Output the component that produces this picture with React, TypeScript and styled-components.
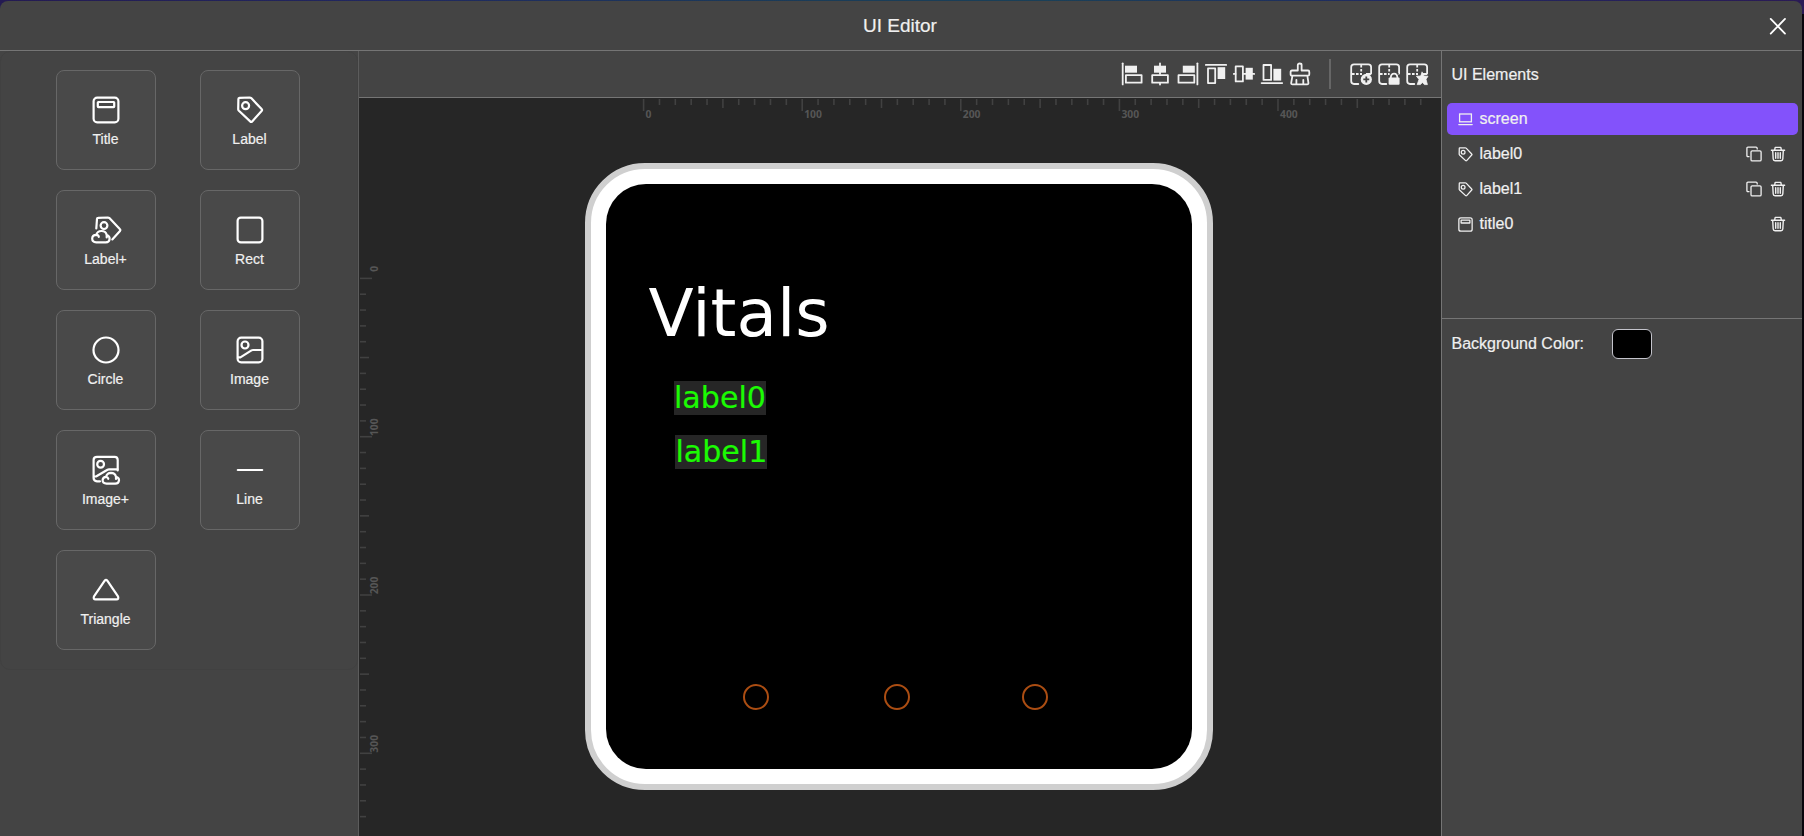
import React from "react";
import styled, { createGlobalStyle } from "styled-components";

const line = "#757575";
const panel = "#444444";

const GlobalStyle = createGlobalStyle`
  *, *::before, *::after { box-sizing: border-box; }
  html, body, #root { height: 100%; margin: 0; }
  body {
    overflow: hidden;
    background: #08060c;
    color: #f0f0f0;
    font-family: "Liberation Sans", Arial, sans-serif;
    -webkit-text-stroke: 0.2px currentColor;
  }
  svg { display: block; flex: none; }
`;

const Page = styled.div`
  height: 836px;
  padding: 1px 2px 0 0;
  background: linear-gradient(90deg, #241a52, #202860 22%, #1a3c58 45%, #1a4058 58%, #202860 78%, #2a1a55) top / 100% 14px no-repeat;
`;

const Modal = styled.div`
  display: flex;
  flex-direction: column;
  height: 835px;
  background: ${panel};
  border-radius: 8px 8px 0 0;
  overflow: hidden;
`;

const Header = styled.header`
  display: grid;
  grid-template-columns: 1fr auto 1fr;
  align-items: center;
  flex: none;
  height: 50px;
  padding-right: 2px;
  border-bottom: 1px solid ${line};
`;

const Heading = styled.h1`
  grid-column: 2;
  margin: 0;
  font-size: 19px;
  font-weight: 400;
  line-height: 24px;
`;

const CloseButton = styled.button`
  justify-self: end;
  margin-right: 11.5px;
  padding: 0;
  border: 0;
  background: none;
  color: #fff;
`;

const Body = styled.div`
  display: flex;
  flex: 1;
  min-height: 0;
`;

const Palette = styled.aside`
  flex: none;
  width: 359px;
  border-right: 1px solid #5c5c5c;
`;

const PaletteCard = styled.div`
  height: 619px;
  padding: 18px 0 0 54.5px;
  border: 1px solid #414141;
  border-radius: 10px;
`;

const PaletteGrid = styled.div`
  display: grid;
  grid-template-columns: 100px 100px;
  column-gap: 44px;
  row-gap: 20px;
`;

const Tile = styled.button`
  display: flex;
  flex-direction: column;
  align-items: center;
  height: 100px;
  padding: 25px 0 0;
  border: 1px solid #676767;
  border-radius: 8px;
  background: #494949;
  color: #fff;
  font: 14px/20px "Liberation Sans", Arial, sans-serif;
  -webkit-text-stroke: 0.2px currentColor;
`;

const TileName = styled.span`
  margin-top: 5px;
  color: #f0f0f0;
`;

const Workspace = styled.main`
  display: flex;
  flex-direction: column;
  flex: none;
  width: 1082px;
`;

const Toolbar = styled.div`
  display: flex;
  align-items: center;
  justify-content: flex-end;
  gap: 4px;
  flex: none;
  height: 47px;
  padding-right: 12.4px;
  border-bottom: 1px solid ${line};
  color: #f0f0f0;
`;

const ToolDivider = styled.span`
  width: 2px;
  height: 30px;
  margin: 0 13.4px;
  background: #666;
`;

const Stage = styled.div`
  position: relative;
  flex: 1;
  background: #262626;
  -webkit-text-stroke: 0;
`;

const Rulers = styled.svg`
  position: absolute;
  inset: 0;
`;

const Device = styled.div`
  position: absolute;
  left: 226.4px;
  top: 64.9px;
  width: 627.6px;
  height: 627.2px;
  padding: 15px;
  border: 6px solid #cfcfcf;
  border-radius: 60px;
  background: #fff;
`;

const Screen = styled.div`
  position: relative;
  height: 100%;
  border-radius: 40px;
  background: #000;
`;

const Placed = styled.span<{ $x: number; $y: number }>`
  position: absolute;
  left: ${(p) => p.$x}px;
  top: ${(p) => p.$y}px;
  font-family: "DejaVu Sans", sans-serif;
  white-space: nowrap;
`;

const TitleText = styled(Placed)`
  font-size: 66px;
  line-height: 76px;
  color: #fff;
`;

const LabelText = styled(Placed)`
  width: 92px;
  height: 34px;
  background: #262626;
  color: #1bfb02;
  font-size: 30.1px;
  line-height: 34px;
  -webkit-text-stroke: 0.2px currentColor;
`;

const Ring = styled.span<{ $x: number }>`
  position: absolute;
  left: ${(p) => p.$x}px;
  top: 500px;
  width: 26px;
  height: 26px;
  border: 2px solid #ab4d12;
  border-radius: 50%;
`;

const Inspector = styled.aside`
  flex: 1;
  min-width: 0;
  border-left: 1px solid ${line};
`;

const ElementList = styled.section`
  height: 268px;
  padding: 0 4px 0 5px;
  border-bottom: 1px solid ${line};
`;

const ListTitle = styled.h2`
  margin: 0;
  padding: 14px 6px 0 4.5px;
  height: 52px;
  font-size: 16px;
  font-weight: 400;
  line-height: 20px;
`;

const Row = styled.div<{ $active?: boolean }>`
  display: flex;
  align-items: center;
  height: 32px;
  margin-bottom: 3px;
  padding: 0 12px 0 11px;
  border-radius: 5px;
  background: ${(p) => (p.$active ? "#8352fb" : "transparent")};
  font-size: 16px;
`;

const RowName = styled.span`
  flex: 1;
  margin-left: 6.5px;
  line-height: 20px;
  padding-bottom: 1px;
`;

const RowActions = styled.span`
  display: flex;
  gap: 8.5px;
`;

const Property = styled.div`
  display: flex;
  align-items: center;
  height: 50px;
  padding-left: 9.5px;
  font-size: 16px;
`;

const PropertyName = styled.span`
  width: 160.5px;
`;

const Swatch = styled.span`
  width: 40px;
  height: 30px;
  border: 1px solid #c4c4cc;
  border-radius: 6px;
  background: #000;
`;

type IconProps = { size?: number; children: React.ReactNode; width?: number; box?: string };

const Icon = ({ size = 28, children, width = 2.2, box }: IconProps) => (
  <svg
    width={size}
    height={size}
    viewBox={box ?? `0 0 ${size} ${size}`}
    fill="none"
    stroke="currentColor"
    strokeWidth={width}
    strokeLinecap="round"
    strokeLinejoin="round"
  >
    {children}
  </svg>
);

const titleShape = (
  <>
    <rect x="1.6" y="1.6" width="24.8" height="24.8" rx="3.6" />
    <rect x="5.8" y="6" width="16.4" height="5.2" rx="0.6" />
  </>
);
const labelShape = (
  <>
    <path d="M2.4 2.9Q2.4 1.9 3.4 1.8L13.6 1.5Q14.6 1.5 15.2 2.1L25.6 13.1Q26.5 14 25.6 15L16.2 25.4Q15.2 26.4 14.2 25.4L2.9 14.8Q2.2 14.1 2.2 13.2Z" />
    <circle cx="9.6" cy="9.7" r="3.5" />
  </>
);

const paletteItems: { name: string; icon: React.ReactNode }[] = [
  { name: "Title", icon: titleShape },
  { name: "Label", icon: labelShape },
  {
    name: "Label+",
    icon: (
      <>
        <path d="M4.3 12.5L5 2.8Q5.1 1.8 6.1 1.8L15.8 1.5Q16.8 1.5 17.4 2.1L28 13.2Q28.8 14 28 14.9L20.3 23.4" />
        <circle cx="12" cy="9.6" r="3.4" />
        <path d="M4.2 26.4Q.2 26.3 .2 22.6Q.3 19 4.2 18.9Q5.3 15 9.4 15Q14 15 14.7 19Q17.8 20 17.6 23Q17.3 26.4 13.8 26.4ZM4.2 18.9Q6.6 19.1 6.8 20.8M14.7 19V21.5" />
      </>
    ),
  },
  { name: "Rect", icon: <rect x="1.6" y="1.6" width="24.8" height="24.8" rx="3.2" /> },
  { name: "Circle", icon: <circle cx="14" cy="14" r="12.5" /> },
  {
    name: "Image",
    icon: (
      <>
        <rect x="1.6" y="1.6" width="24.8" height="24.8" rx="3.6" />
        <circle cx="9" cy="9" r="3.5" />
        <path d="M2 21.4H4.4L15.5 14.4Q16.2 14 17 14H26" />
      </>
    ),
  },
  {
    name: "Image+",
    icon: (
      <>
        <path d="M8 25.3H5Q1.6 25 1.6 22V4Q1.6.8 5 .8H22.6Q25.7.8 25.7 4V14.5" />
        <circle cx="8.6" cy="8.3" r="3.4" />
        <path d="M2 20.5H4L15.5 13.7Q16.2 13.3 17 13.3H25.5" />
        <path d="M14.6 27.6Q10.5 27.5 10.6 24.1Q10.8 21 14 20.8Q15.1 16.9 18.9 16.9Q23.2 17 24 20.8Q27.2 21.7 27 24.4Q26.7 27.6 23.3 27.6ZM14 20.8Q16 21.1 16.3 22.8M24 20.8V23" />
      </>
    ),
  },
  { name: "Line", icon: <path d="M1.8 14H26.2" /> },
  {
    name: "Triangle",
    icon: <path d="M12.7 4.7Q14 3.1 15.3 4.7L26 20.4Q27 23.4 24.5 23.4H3.6Q1 23.4 2 20.4Z" />,
  },
];

// Overflow stays visible so that rounded caps and cloud outlines are not clipped.
const TileIcon = styled.span`
  svg {
    overflow: visible;
  }
`;

const alignTools: React.ReactNode[] = [
  <>
    <path d="M2.7 1.3V22.4" />
    <rect x="5" y="3.7" width="12" height="7" fill="currentColor" stroke="none" />
    <rect x="5.9" y="13.2" width="15.7" height="7.5" />
  </>,
  <>
    <path d="M12 1.3V12M12 21V22.6" />
    <rect x="6" y="3.7" width="12" height="7" fill="currentColor" stroke="none" />
    <rect x="4.2" y="13.2" width="15.7" height="7.5" />
  </>,
  <>
    <path d="M21.4 1.3V22.4" />
    <rect x="6.8" y="3.7" width="12" height="7" fill="currentColor" stroke="none" />
    <rect x="2.5" y="13.2" width="15.8" height="7.5" />
  </>,
  <>
    <path d="M1.8 2.9H22.2" />
    <rect x="4" y="6.4" width="7.2" height="14.7" />
    <rect x="13.6" y="5.2" width="7.6" height="11.8" fill="currentColor" stroke="none" />
  </>,
  <>
    <path d="M1.8 11.9H3.5M11 11.9H22.2" />
    <rect x="3.7" y="4.4" width="7.2" height="15" />
    <rect x="13.6" y="5.8" width="7.2" height="11.8" fill="currentColor" stroke="none" />
  </>,
  <>
    <path d="M1.6 21.1H22.2" />
    <rect x="3.5" y="3" width="7.6" height="14.9" />
    <rect x="13.4" y="6.8" width="7.8" height="11.8" fill="currentColor" stroke="none" />
  </>,
  <>
    <path d="M9.8 8.5V3Q9.8 1.5 11.7 1.5Q13.6 1.5 13.6 3V8.5H20Q21.3 8.5 21.3 10V12.2Q21.3 13.6 20 13.6H4Q2.6 13.6 2.6 12.2V10Q2.6 8.5 4 8.5ZM4.4 13.8L3.2 20.8Q3 22.4 4.5 22.4H19.1Q20.6 22.4 20.4 20.8L19.4 13.8M8.4 22V17.8M15.3 22V17.8" />
  </>,
];

const gridFrame = (
  <>
    <path d="M9.3 22H5Q2.2 22 2.2 19V5Q2.2 2.3 5 2.3H19.3Q22.1 2.3 22.1 5V11.5" />
    <path d="M12.2 3V11M3 12H13" strokeDasharray="2.6 1.4" strokeLinecap="butt" />
    <path d="M17 12H22" strokeLinecap="butt" />
  </>
);

const gridTools: React.ReactNode[] = [
  <>
    {gridFrame}
    <circle cx="17.3" cy="17.4" r="5.6" fill="currentColor" stroke="none" />
    <path d="M17.3 14.4V20.4M14.3 17.4H20.3" stroke={panel} strokeLinecap="butt" />
  </>,
  <>
    {gridFrame}
    <path d="M12.6 14H21.6" stroke={panel} strokeWidth="6" strokeLinecap="butt" />
    <rect x="11.6" y="15.4" width="11" height="7.4" rx="1" fill="currentColor" stroke="none" />
    <path d="M13.8 15.6Q14 11.6 17.1 11.6Q20.2 11.6 20.4 15.6" />
  </>,
  <>
    {gridFrame}
    <path
      d="M17.2 10.2L18.9 14L23 14.2L21 17.2L22.4 22.6H19.4L17.4 20.4L15.4 22.6H12.2L14 17.4L11.4 14.2L15.5 14Z"
      fill="currentColor"
      strokeWidth="0.8"
    />
  </>,
];

const Glyph = ({ kind }: { kind: string }) => {
  if (kind === "screen")
    return (
      <Icon size={15} width={1.3}>
        <rect x="1.6" y="2" width="11.8" height="7.8" strokeLinejoin="miter" />
        <path d="M.8 12.6H14.2" />
      </Icon>
    );
  return (
    <Icon size={15} width={2.4} box="0 0 28 28">
      {kind === "title" ? titleShape : labelShape}
    </Icon>
  );
};

const CopyIcon = () => (
  <Icon size={16} width={1.3}>
    <rect x="5" y="4.9" width="10.1" height="10" rx="1.2" />
    <path d="M3 10.7H2Q.9 10.7.9 9.6V2.4Q.9 1.2 2 1.2H10Q11.2 1.2 11.2 2.4V3" />
  </Icon>
);

const TrashIcon = () => (
  <Icon size={16} width={1.4}>
    <path d="M1.4 4.3H14.6M4.6 4.1L5.2 1.4H10.8L11.4 4.1M2.7 4.6L3.2 13Q3.3 14.8 5 14.8H11Q12.7 14.8 12.8 13L13.3 4.6M5.7 6.8V12.2M8 6.8V12.2M10.3 6.8V12.2" />
  </Icon>
);

const elements = [
  { name: "screen", kind: "screen", active: true },
  { name: "label0", kind: "label", copy: true, remove: true },
  { name: "label1", kind: "label", copy: true, remove: true },
  { name: "title0", kind: "title", remove: true },
];

const tickLength = (value: number) => (value % 100 === 0 ? 12 : value % 50 === 0 ? 9 : 6);
const range = (last: number) => Array.from({ length: last / 10 + 1 }, (_, i) => i * 10);

const RulerMarks = () => (
  <Rulers width="1082" height="738" fill="#565656" fontFamily='"Noto Sans", sans-serif' fontSize="10.3" fontWeight="700">
    {range(490).map((v) => {
      const x = 284.6 + v * 1.586;
      return (
        <g key={`x${v}`}>
          <path d={`M${x} 1v${tickLength(v)}`} stroke="#414141" strokeWidth="1.6" />
          {v % 100 === 0 && (
            <text x={x + 2} y="19.8">
              {v}
            </text>
          )}
        </g>
      );
    })}
    {range(340).map((v) => {
      const y = 180.4 + v * 1.583;
      return (
        <g key={`y${v}`}>
          <path d={`M1 ${y}h${tickLength(v)}`} stroke="#414141" strokeWidth="1.6" />
          {v % 100 === 0 && (
            <text transform={`translate(18.8 ${y - 9.5}) rotate(-90)`} textAnchor="middle">
              {v}
            </text>
          )}
        </g>
      );
    })}
  </Rulers>
);

export default function App() {
  return (
    <Page>
      <GlobalStyle />
      <Modal>
        <Header>
          <Heading>UI Editor</Heading>
          <CloseButton aria-label="Close">
            <Icon size={22} width={1.8}>
              <path d="M3.7 3.9L18 18.6M18 3.9L3.7 18.6" />
            </Icon>
          </CloseButton>
        </Header>
        <Body>
          <Palette>
            <PaletteCard>
              <PaletteGrid>
                {paletteItems.map((item) => (
                  <Tile key={item.name}>
                    <TileIcon>
                      <Icon>{item.icon}</Icon>
                    </TileIcon>
                    <TileName>{item.name}</TileName>
                  </Tile>
                ))}
              </PaletteGrid>
            </PaletteCard>
          </Palette>
          <Workspace>
            <Toolbar>
              {alignTools.map((shape, i) => (
                <Icon key={i} size={24} width={1.8}>
                  {shape}
                </Icon>
              ))}
              <ToolDivider />
              {gridTools.map((shape, i) => (
                <Icon key={i} size={24} width={1.8}>
                  {shape}
                </Icon>
              ))}
            </Toolbar>
            <Stage>
              <RulerMarks />
              <Device>
                <Screen>
                  <TitleText $x={42.2} $y={92.6}>
                    Vitals
                  </TitleText>
                  <LabelText $x={67.6} $y={197.6}>
                    label0
                  </LabelText>
                  <LabelText $x={69} $y={251.6}>
                    label1
                  </LabelText>
                  <Ring $x={136.4} />
                  <Ring $x={277.4} />
                  <Ring $x={415.4} />
                </Screen>
              </Device>
            </Stage>
          </Workspace>
          <Inspector>
            <ElementList>
              <ListTitle>UI Elements</ListTitle>
              {elements.map((el) => (
                <Row key={el.name} $active={el.active}>
                  <Glyph kind={el.kind} />
                  <RowName>{el.name}</RowName>
                  <RowActions>
                    {el.copy && <CopyIcon />}
                    {el.remove && <TrashIcon />}
                  </RowActions>
                </Row>
              ))}
            </ElementList>
            <Property>
              <PropertyName>Background Color:</PropertyName>
              <Swatch />
            </Property>
          </Inspector>
        </Body>
      </Modal>
    </Page>
  );
}
